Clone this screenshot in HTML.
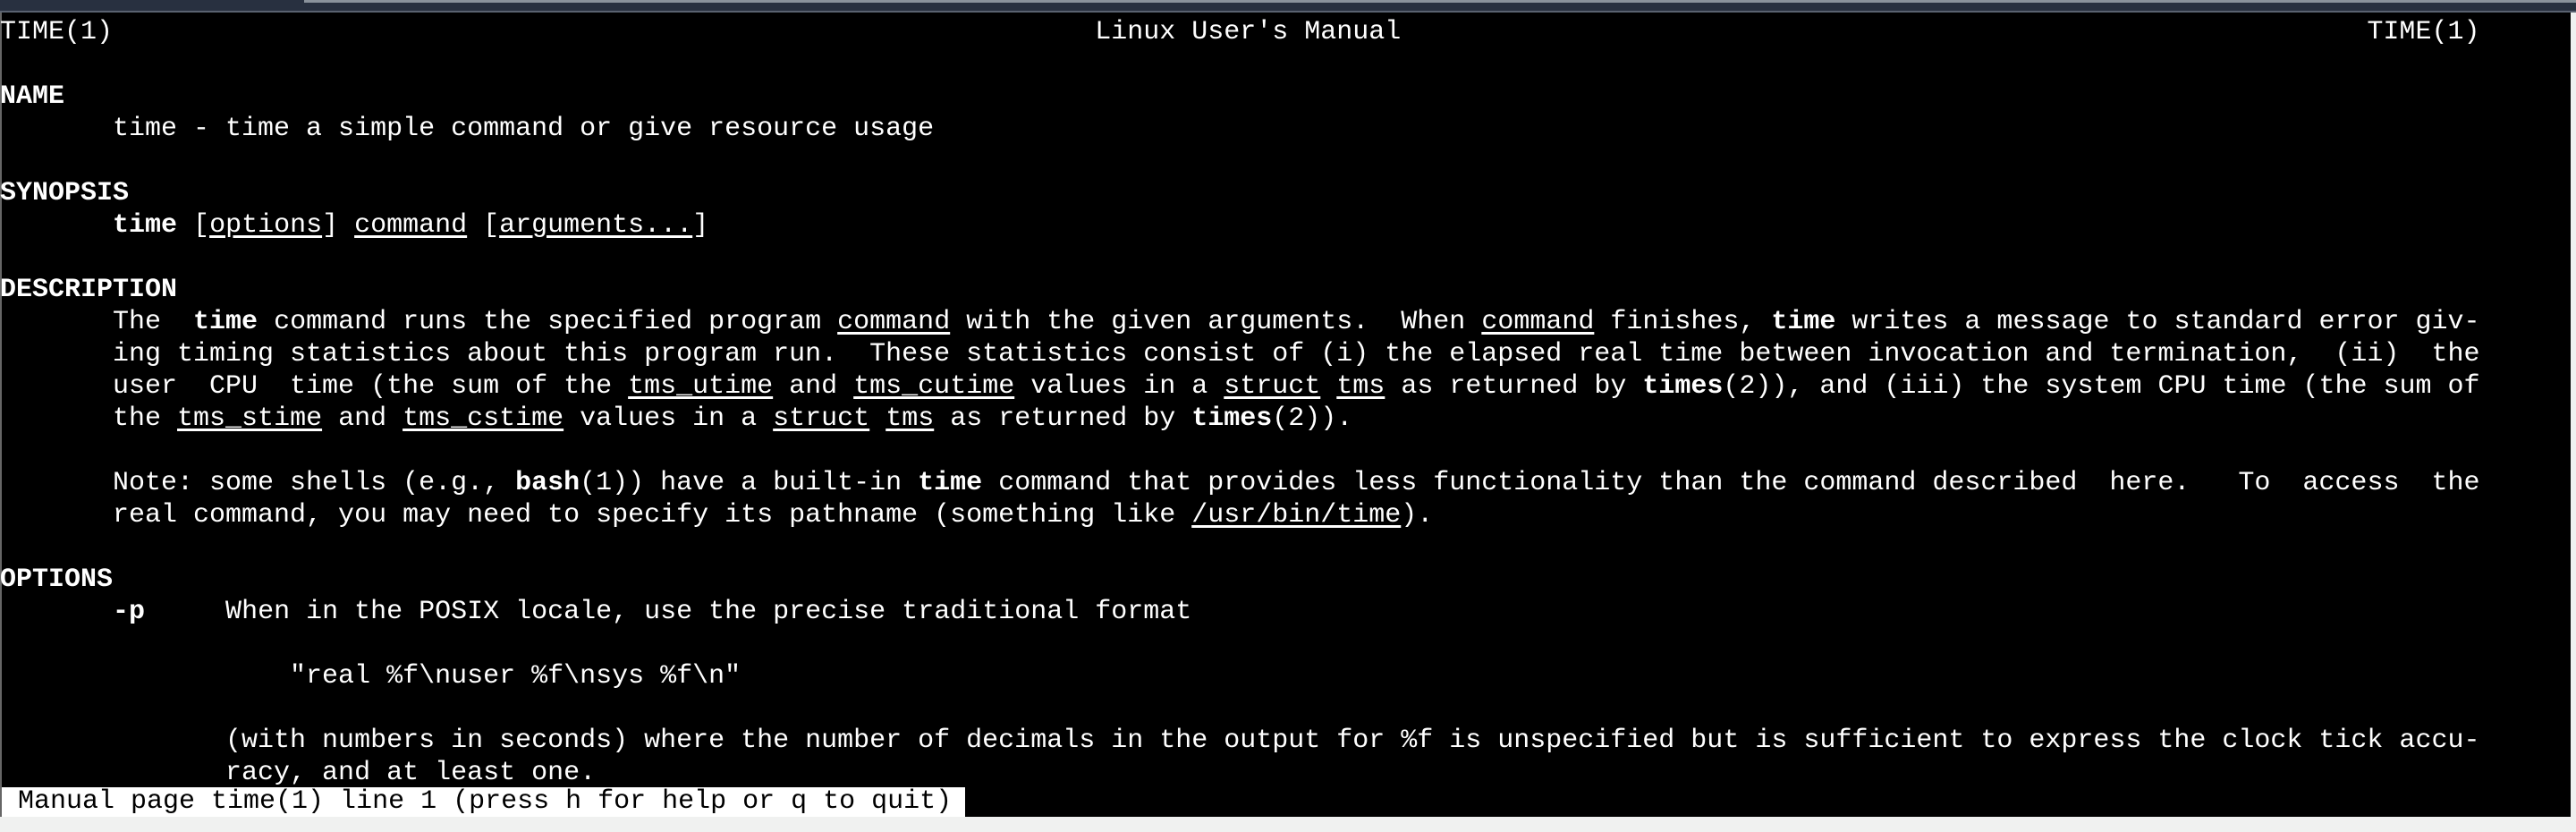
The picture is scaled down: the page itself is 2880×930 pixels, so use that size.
<!DOCTYPE html>
<html><head><meta charset="utf-8"><style>
html,body{margin:0;padding:0;}
body{width:2880px;height:930px;background:#f0f1f0;position:relative;overflow:hidden;font-family:"Liberation Mono",monospace;}
#top{position:absolute;left:0;top:0;width:2880px;height:12px;background:#283040;}
#tab{position:absolute;left:340px;top:0;width:2540px;height:3px;background:#8a929c;}
#line{position:absolute;left:0;top:12px;width:2880px;height:2px;background:#5a6270;}
#term{position:absolute;left:2px;top:14px;width:2872px;height:899px;background:#000;}
#left{position:absolute;left:0;top:14px;width:2px;height:899px;background:#666;}
pre{margin:0;position:absolute;left:-2px;top:4px;color:#fff;font-size:30px;line-height:36px;font-family:"Liberation Mono",monospace;white-space:pre;}
b{font-weight:bold;}
u{text-decoration:underline;text-underline-offset:4px;}
#status{position:absolute;left:2px;top:880px;width:1077px;height:33px;background:#fff;color:#000;font-size:30px;line-height:33px;white-space:pre;font-family:"Liberation Mono",monospace;}
</style></head><body>
<div id="top"></div><div id="tab"></div><div id="line"></div>
<div id="left"></div>
<div id="term"><pre>TIME(1)                                                             Linux User's Manual                                                            TIME(1)

<b>NAME</b>
       time - time a simple command or give resource usage

<b>SYNOPSIS</b>
       <b>time</b> [<u>options</u>] <u>command</u> [<u>arguments...</u>]

<b>DESCRIPTION</b>
       The  <b>time</b> command runs the specified program <u>command</u> with the given arguments.  When <u>command</u> finishes, <b>time</b> writes a message to standard error giv-
       ing timing statistics about this program run.  These statistics consist of (i) the elapsed real time between invocation and termination,  (ii)  the
       user  CPU  time (the sum of the <u>tms_utime</u> and <u>tms_cutime</u> values in a <u>struct</u> <u>tms</u> as returned by <b>times</b>(2)), and (iii) the system CPU time (the sum of
       the <u>tms_stime</u> and <u>tms_cstime</u> values in a <u>struct</u> <u>tms</u> as returned by <b>times</b>(2)).

       Note: some shells (e.g., <b>bash</b>(1)) have a built-in <b>time</b> command that provides less functionality than the command described  here.   To  access  the
       real command, you may need to specify its pathname (something like <u>/usr/bin/time</u>).

<b>OPTIONS</b>
       <b>-p</b>     When in the POSIX locale, use the precise traditional format

                  "real %f\nuser %f\nsys %f\n"

              (with numbers in seconds) where the number of decimals in the output for %f is unspecified but is sufficient to express the clock tick accu-
              racy, and at least one.</pre></div>
<div id="status"> Manual page time(1) line 1 (press h for help or q to quit)</div>
</body></html>
